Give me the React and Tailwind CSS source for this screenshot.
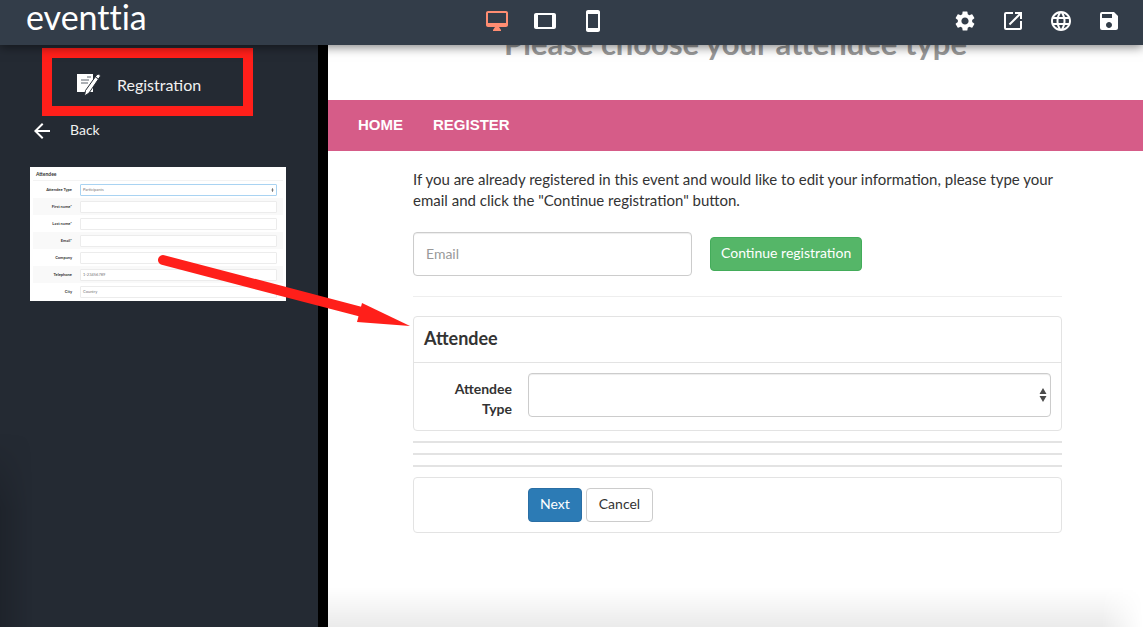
import { useState } from "react";
import {
  MdArrowBack,
  MdLanguage,
  MdOpenInNew,
  MdSave,
  MdSettings,
  MdSmartphone,
  MdTablet,
} from "react-icons/md";

function DesktopIcon({ size }) {
  return (
    <svg width={size} height={size} viewBox="0 0 24 24" fill="currentColor">
      <path d="M21 2H3c-1.100 0-2 .9-2 2v12c0 1.100.9 2 2 2h7l-2 3v1h8v-1l-2-3h7c1.100 0 2-.9 2-2V4c0-1.100-.9-2-2-2zm0 12H3V4h18v10z" />
    </svg>
  );
}

const devices = [
  { id: "desktop", label: "Desktop", Icon: DesktopIcon },
  { id: "tablet", label: "Tablet", Icon: MdTablet },
  { id: "mobile", label: "Mobile", Icon: MdSmartphone },
];

const actions = [
  { id: "settings", label: "Settings", Icon: MdSettings },
  { id: "open", label: "Open in new window", Icon: MdOpenInNew },
  { id: "language", label: "Language", Icon: MdLanguage },
  { id: "save", label: "Save", Icon: MdSave },
];

const previewRows = [
  { label: "Attendee Type", value: "Participants", select: true },
  { label: "First name*" },
  { label: "Last name*" },
  { label: "Email*" },
  { label: "Company" },
  { label: "Telephone", value: "1-23456789" },
  { label: "City", value: "Country" },
];

function TopBar() {
  const [device, setDevice] = useState("desktop");

  return (
    <header className="relative z-10 flex h-[45px] items-center justify-between bg-[#333d49] pr-[22px] pb-[3px] pl-[26px] text-white shadow-[0_2px_10px_rgba(0,0,0,0.5)]">
      <a
        href="#"
        className="w-[110px] pb-2 text-[34px] leading-[42px] [font-variant-ligatures:none]"
      >
        eventtia
      </a>
      <div className="flex gap-6">
        {devices.map(({ id, label, Icon }) => (
          <button
            key={id}
            aria-label={label}
            onClick={() => setDevice(id)}
            className={device === id ? "text-[#ff8d72]" : "text-white"}
          >
            <Icon size={24} />
          </button>
        ))}
      </div>
      <div className="flex gap-6">
        {actions.map(({ id, label, Icon }) => (
          <button key={id} aria-label={label}>
            <Icon size={24} />
          </button>
        ))}
      </div>
    </header>
  );
}

function RegistrationIcon() {
  return (
    <svg width="24" height="24" viewBox="0 0 24 24">
      <path d="M0 1h16v18H0z" fill="#fff" />
      <path d="M10 4h4M4 7h8M4 10h7" stroke="#5a626c" strokeWidth="1" />
      <path
        d="M20 1.500q2-1.500 3.500 1.500L12 20l-4.500 3 1-5.500z"
        fill="#fff"
        stroke="#242a33"
        strokeWidth="1"
      />
      <path d="M18.500 4l3 2" stroke="#242a33" strokeWidth="1" />
    </svg>
  );
}

function SelectArrows({ className }) {
  return (
    <svg viewBox="0 0 8 14" className={className} fill="#4b4b4b">
      <path d="M4 0l3.500 6h-7zM4 14l3.500-6h-7z" />
    </svg>
  );
}

function FormPreview() {
  return (
    <div className="mt-6 ml-[30px] w-64 bg-white px-[3px] pb-px text-[4px] leading-[4px] text-[#333]">
      <p className="h-[14px] border-b border-[#f3f3f3] pl-[3px] text-[5px] leading-[15px] font-bold">
        Attendee
      </p>
      {previewRows.map((row) => (
        <div
          key={row.label}
          className="flex h-[17px] items-center gap-2 pr-[6px] even:bg-white odd:bg-[#f9f9f9]"
        >
          <span className="w-[39px] text-right font-bold whitespace-nowrap">
            {row.label}
          </span>
          <span
            className={`flex h-3 flex-1 items-center justify-between rounded-[1px] border bg-white px-[2px] text-[#777] ${
              row.select ? "border-[#a9d3f2]" : "border-[#ececec]"
            }`}
          >
            {row.value}
            {row.select && <SelectArrows className="h-1 w-[3px]" />}
          </span>
        </div>
      ))}
    </div>
  );
}

function Sidebar() {
  return (
    <aside className="relative w-[328px] shrink-0 border-r-[10px] border-black bg-[#242a33] text-[#f1f1f1]">
      <div className="mt-[3px] ml-[42px] flex h-[68px] w-[211px] items-center gap-4 border-10 border-[#ff1f1a] pt-[6px] pl-[25px]">
        <RegistrationIcon />
        <span className="text-base">Registration</span>
      </div>
      <a
        href="#"
        className="mt-[3px] ml-[30px] flex items-center gap-4 text-sm leading-5"
      >
        <MdArrowBack size={24} className="text-white" />
        <span className="pb-[2px]">Back</span>
      </a>
      <FormPreview />
      <div className="pointer-events-none absolute bottom-0 left-0 h-1/3 w-8 bg-linear-to-r from-black/15 to-transparent mask-t-from-60%" />
    </aside>
  );
}

function EventPage() {
  const [email, setEmail] = useState("");

  return (
    <main className="relative flex-1 overflow-hidden bg-white text-[15px] text-[#333]">
      <h1 className="-mt-[23px] h-[78px] text-center text-[31px] leading-[42px] font-bold text-[#999]">
        Please choose your attendee type
      </h1>
      <nav className="flex h-[51px] items-center gap-[30px] bg-[#d65c88] px-[30px] font-['Liberation_Sans',sans-serif] text-[15px] font-bold text-white">
        <a href="#">HOME</a>
        <a href="#">REGISTER</a>
      </nav>

      <div className="pt-[18px] pr-[81px] pl-[85px]">
        <p className="leading-[21px]">
          If you are already registered in this event and would like to edit
          your information, please type your email and click the "Continue
          registration" button.
        </p>

        <form
          className="mt-[21px] flex items-center gap-[18px] border-b border-[#eee] pb-5 text-sm"
          onSubmit={(e) => e.preventDefault()}
        >
          <input
            type="email"
            aria-label="Email"
            placeholder="Email"
            value={email}
            onChange={(e) => setEmail(e.target.value)}
            className="h-11 w-[279px] rounded border border-[#ccc] px-3 pb-[2px] shadow-[inset_0_1px_1px_rgba(0,0,0,0.075)] placeholder:text-[#999]"
          />
          <button className="h-[34px] rounded border border-[#43ac5a] bg-[#55b668] px-[10px] pb-[2px] text-white">
            Continue registration
          </button>
        </form>

        <form className="mt-[19px]" onSubmit={(e) => e.preventDefault()}>
          <section className="rounded border border-[#e3e3e3]">
            <h2 className="border-b border-[#e3e3e3] px-[10px] pt-[9px] pb-3 text-lg leading-6 font-bold">
              Attendee
            </h2>
            <div className="flex items-start gap-4 px-[10px] pt-[10px] pb-[11px] text-sm">
              <label
                htmlFor="attendee-type"
                className="w-[88px] pt-[6px] pl-5 text-right leading-5 font-bold"
              >
                Attendee Type
              </label>
              <div className="relative flex-1">
                <select
                  id="attendee-type"
                  className="block h-11 w-full appearance-none rounded border border-[#ccc] bg-white px-3 shadow-[inset_0_1px_1px_rgba(0,0,0,0.075)]"
                >
                  <option></option>
                </select>
                <SelectArrows className="pointer-events-none absolute top-[15px] right-1 h-[14px] w-2" />
              </div>
            </div>
          </section>

          <div className="my-[10px] flex flex-col gap-[10px]">
            <div className="h-[2px] bg-[#e3e3e3]" />
            <div className="h-[2px] bg-[#e3e3e3]" />
            <div className="h-[2px] bg-[#e3e3e3]" />
          </div>

          <div className="flex gap-1 rounded border border-[#e3e3e3] py-[10px] pl-[114px] text-sm">
            <button className="h-[34px] rounded border border-[#2a6ea4] bg-[#2c7bb5] px-[11px] pb-[2px] text-white">
              Next
            </button>
            <button
              type="button"
              className="h-[34px] rounded border border-[#ccc] bg-white px-3 pb-[2px]"
            >
              Cancel
            </button>
          </div>
        </form>
      </div>

      {/* fade along the bottom edge */}
      <div className="pointer-events-none absolute bottom-0 left-0 h-10 w-full bg-linear-to-b from-transparent to-black/8 mask-r-from-95%" />
    </main>
  );
}

function DragArrow() {
  return (
    <svg
      className="pointer-events-none absolute top-[250px] left-[155px]"
      width="260"
      height="80"
      fill="#ff1f1a"
    >
      <path
        d="M8 10L205 61.500"
        stroke="#ff1f1a"
        strokeWidth="10"
        strokeLinecap="round"
      />
      <path d="M207 53L255 76L202 72z" />
    </svg>
  );
}

export default function App() {
  return (
    <div className="relative flex min-h-screen flex-col font-['Lato',sans-serif]">
      <TopBar />
      <div className="flex flex-1">
        <Sidebar />
        <EventPage />
      </div>
      <DragArrow />
    </div>
  );
}
